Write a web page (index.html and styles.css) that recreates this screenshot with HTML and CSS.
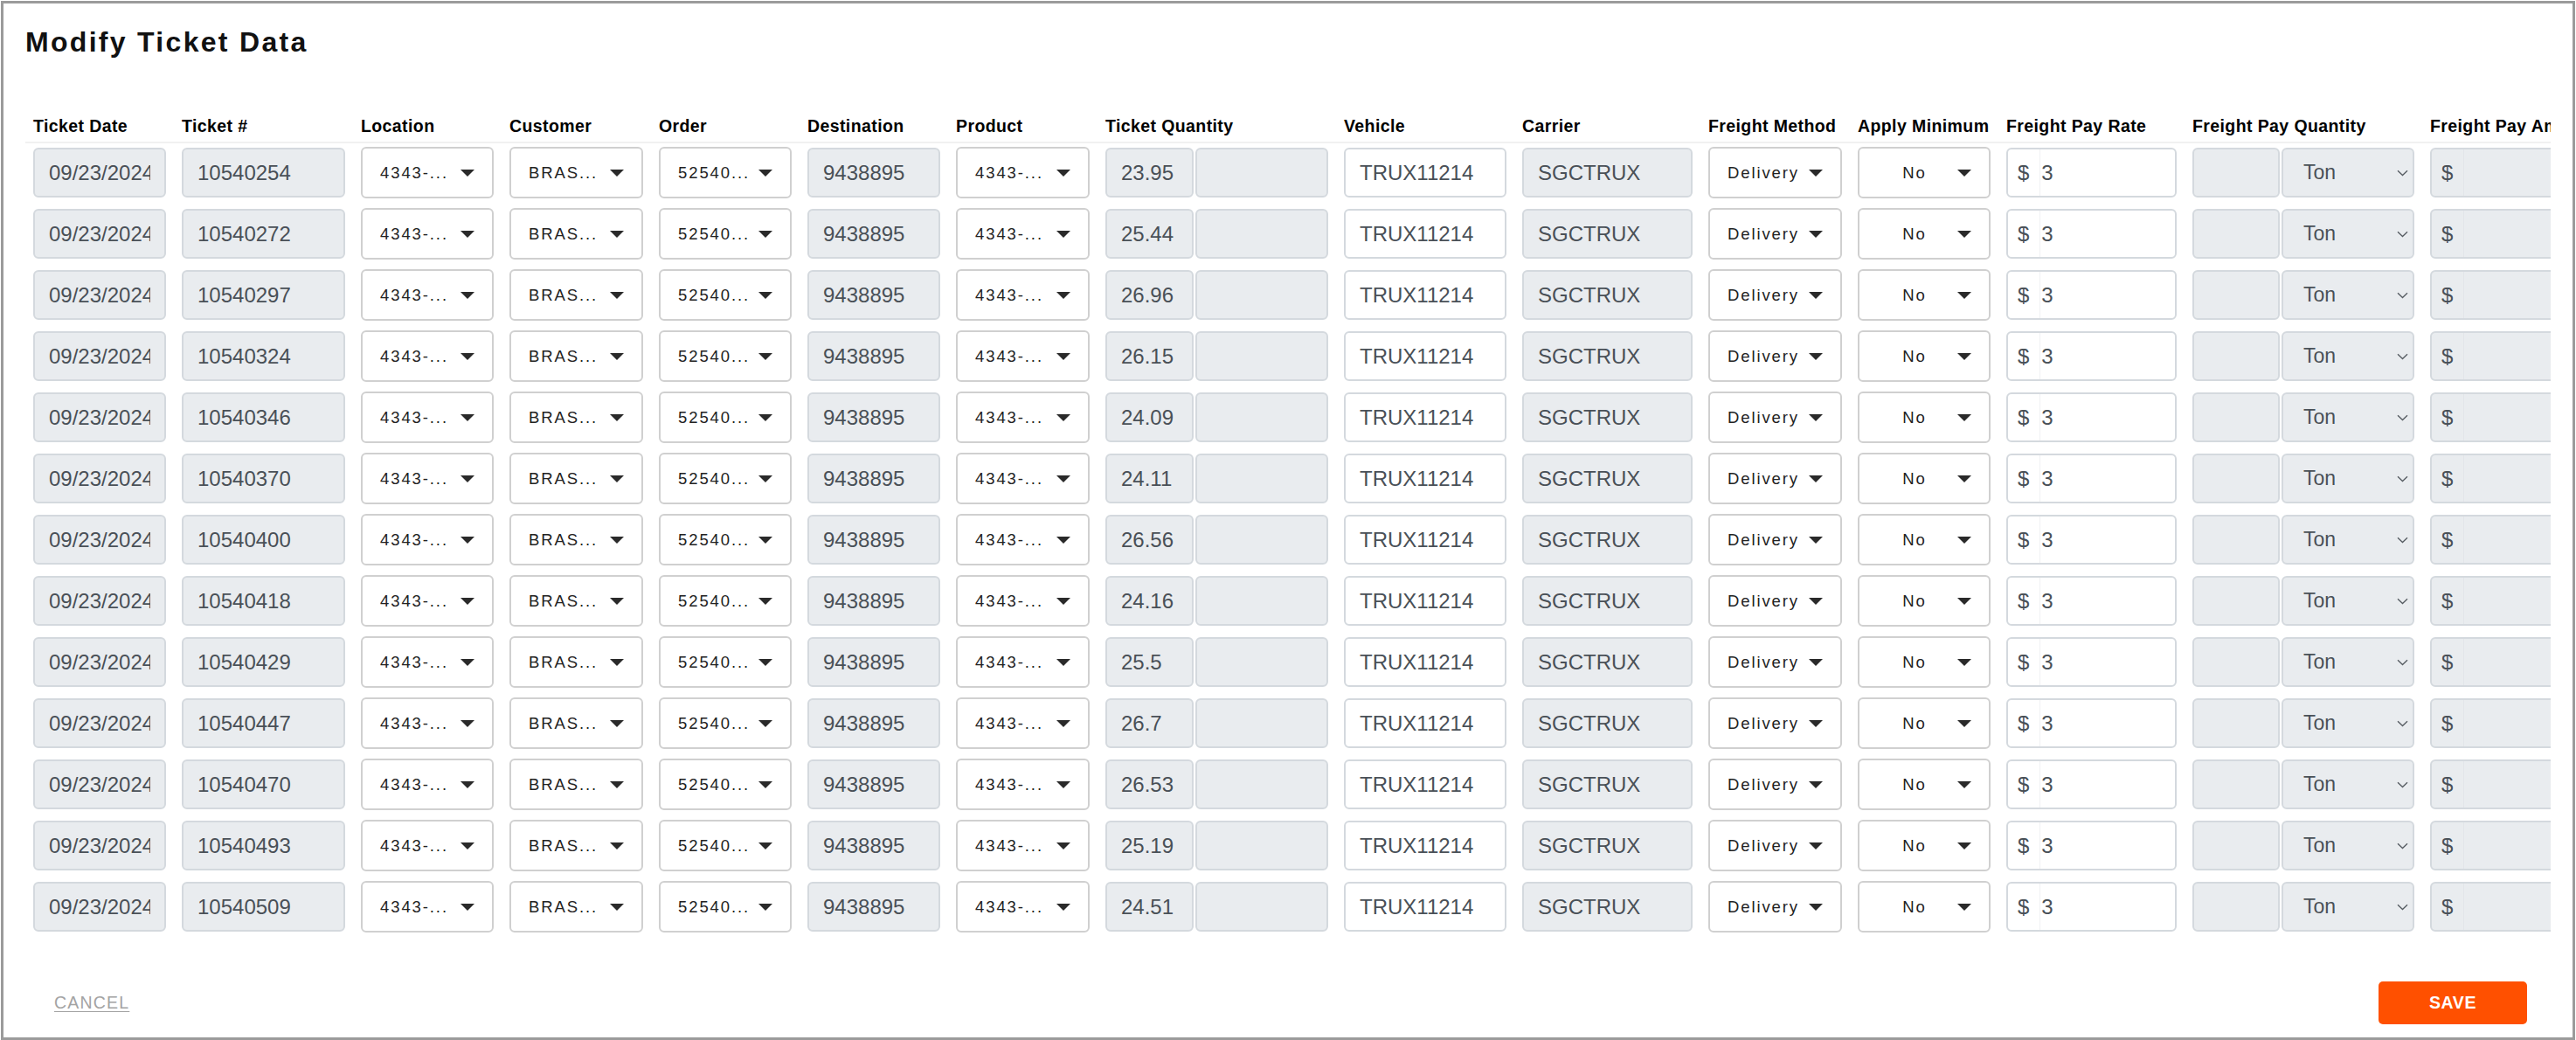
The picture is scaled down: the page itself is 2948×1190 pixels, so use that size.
FILE: index.html
```html
<!DOCTYPE html>
<html lang="en">
<head>
  <meta charset="utf-8">
  <title>Modify Ticket Data</title>
  <link rel="stylesheet" href="styles.css">
</head>
<body>
  <div class="modal">
    <p class="modal-title">Modify Ticket Data</p>

    <div class="ticket-table">
      <div class="ticket-head cols">
        <div>Ticket Date</div>
        <div>Ticket #</div>
        <div>Location</div>
        <div>Customer</div>
        <div>Order</div>
        <div>Destination</div>
        <div>Product</div>
        <div>Ticket Quantity</div>
        <div>Vehicle</div>
        <div>Carrier</div>
        <div>Freight Method</div>
        <div>Apply Minimum</div>
        <div>Freight Pay Rate</div>
        <div>Freight Pay Quantity</div>
        <div>Freight Pay Amount</div>
      </div>
      <div class="js-rows"></div>
    </div>

    <div class="modal-footer">
      <a class="cancel-btn">CANCEL</a>
      <button class="save-btn">SAVE</button>
    </div>
  </div>

  <script>
    const tickets = [
      ['10540254', '23.95'],
      ['10540272', '25.44'],
      ['10540297', '26.96'],
      ['10540324', '26.15'],
      ['10540346', '24.09'],
      ['10540370', '24.11'],
      ['10540400', '26.56'],
      ['10540418', '24.16'],
      ['10540429', '25.5'],
      ['10540447', '26.7'],
      ['10540470', '26.53'],
      ['10540493', '25.19'],
      ['10540509', '24.51']
    ];

    function dropdown(text, extra) {
      return `<div class="dd ${extra || ''}"><span class="dd-text">${text}</span><span class="caret"></span></div>`;
    }

    let rowsHtml = '';
    tickets.forEach(function (t) {
      rowsHtml += `
        <div class="ticket-row cols">
          <input class="field locked" value="09/23/2024" readonly>
          <input class="field locked" value="${t[0]}" readonly>
          ${dropdown('4343-...')}
          ${dropdown('BRAS...')}
          ${dropdown('52540...')}
          <input class="field locked" value="9438895" readonly>
          ${dropdown('4343-...')}
          <div class="pair">
            <input class="field locked first" value="${t[1]}" readonly>
            <input class="field locked" value="" readonly>
          </div>
          <input class="field" value="TRUX11214">
          <input class="field locked" value="SGCTRUX" readonly>
          ${dropdown('Delivery')}
          ${dropdown('No', 'dd-center')}
          <div class="addon-group">
            <span class="addon">$</span><input value="3">
          </div>
          <div class="pair">
            <input class="field locked first short" value="" readonly>
            <div class="ton-select"><span>Ton</span>
              <svg class="chevron" width="13" height="8" viewBox="0 0 13 8"><path d="M1 1.2l5.5 5.3L12 1.2" fill="none" stroke="#555b61" stroke-width="1.3"/></svg>
            </div>
          </div>
          <div class="addon-group locked">
            <span class="addon">$</span><input value="" readonly>
          </div>
        </div>`;
    });
    document.querySelector('.js-rows').innerHTML = rowsHtml;
  </script>
</body>
</html>
```

FILE: styles.css
```css
body {
  margin: 0;
  font-family: "Liberation Sans", Arial, sans-serif;
  background-color: white;
  overflow: hidden;
}

.modal {
  margin: 1px 0 0 1px;
  width: 2946px;
  height: 1189px;
  box-sizing: border-box;
  border: 3px solid #9b9b9b;
  padding: 25px;
}

.modal-title {
  margin: 0;
  font-size: 32px;
  line-height: 38px;
  font-weight: bold;
  letter-spacing: 2.3px;
  color: #111;
}

.ticket-table {
  margin-top: 65px;
  overflow: hidden;
}

.cols {
  display: grid;
  grid-template-columns: 152px 187px 152px 153px 152px 152px 153px 255px 186px 195px 153px 152px 195px 254px 254px;
  column-gap: 18px;
  padding-left: 9px;
}

.ticket-head {
  font-size: 19.5px;
  line-height: 24px;
  font-weight: bold;
  letter-spacing: 0.4px;
  color: #000;
  white-space: nowrap;
  padding-bottom: 6px;
  border-bottom: 2px solid #f1f1f1;
}

.ticket-row {
  height: 70px;
  box-sizing: border-box;
  padding-top: 5px;
  align-items: start;
}

/* inputs */
.field {
  width: 100%;
  height: 57px;
  box-sizing: border-box;
  border: 2px solid #d4d9de;
  border-radius: 6px;
  padding: 0 16px;
  font: inherit;
  font-size: 24px;
  color: #495057;
  background-color: #fff;
  outline: none;
}
.field.locked {
  background-color: #e9ecef;
}

.pair {
  display: flex;
  gap: 2px;
}
.pair .field {
  flex: 1;
  min-width: 0;
}
.pair .first {
  flex: none;
  width: 101px;
}
.pair .first.short {
  width: 100px;
}

/* custom dropdowns */
.dd {
  display: flex;
  align-items: center;
  height: 59px;
  margin-top: -1px;
  box-sizing: border-box;
  border: 2px solid #d0d0d0;
  border-radius: 6px;
  background-color: #fff;
  padding: 0 20px;
  font-size: 18.5px;
  letter-spacing: 1.9px;
  color: #222;
}
.dd-text {
  flex: 1;
  white-space: nowrap;
}
.dd-center .dd-text {
  text-align: center;
}
.caret {
  width: 0;
  height: 0;
  margin-left: 6px;
  border-left: 8px solid transparent;
  border-right: 8px solid transparent;
  border-top: 8px solid #2a2a2a;
}

.ton-select {
  flex: 1;
  display: flex;
  align-items: center;
  height: 57px;
  box-sizing: border-box;
  border: 2px solid #d4d9de;
  border-radius: 6px;
  background-color: #e9ecef;
  padding: 0 5px 0 23px;
  font-size: 23px;
  color: #495057;
}
.ton-select span {
  flex: 1;
}

/* $ input groups */
.addon-group {
  display: flex;
  align-items: stretch;
  height: 57px;
  box-sizing: border-box;
  border: 2px solid #d4d9de;
  border-radius: 6px;
  background-color: #fff;
  overflow: hidden;
  font-size: 24px;
  color: #495057;
}
.addon {
  display: flex;
  align-items: center;
  padding: 0 12px 0 11px;
  border-right: 1px solid #f0f1f3;
}
.addon-group input {
  flex: 1;
  min-width: 0;
  border: none;
  background: transparent;
  padding: 0 0 0 1px;
  font: inherit;
  color: inherit;
  outline: none;
}
.addon-group.locked {
  background-color: #e9ecef;
}
.addon-group.locked .addon {
  border-right-color: #e2e5e9;
}

/* footer */
.modal-footer {
  display: flex;
  justify-content: space-between;
  align-items: center;
  margin-top: 49px;
  padding: 0 27px 0 33px;
}
.cancel-btn {
  font-size: 19.5px;
  letter-spacing: 1.2px;
  color: #a3a3a3;
  text-decoration: underline;
  text-underline-offset: 3px;
  cursor: pointer;
}
.save-btn {
  width: 170px;
  height: 49px;
  border: none;
  border-radius: 5px;
  background-color: #ff5000;
  color: #fff;
  font-family: inherit;
  font-size: 19.5px;
  font-weight: bold;
  letter-spacing: 0.6px;
  cursor: pointer;
}
```
